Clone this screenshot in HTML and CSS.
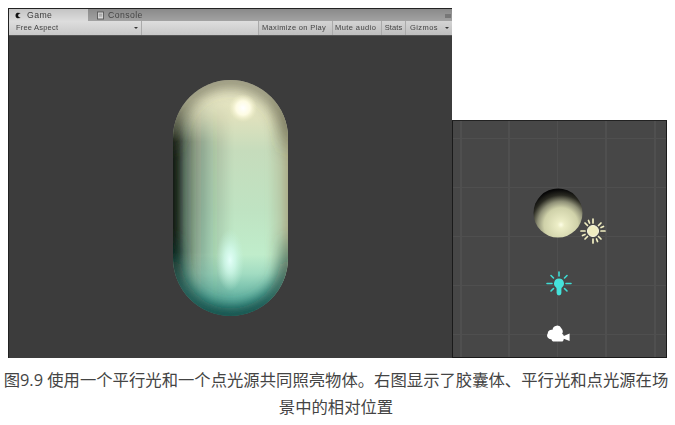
FILE: index.html
```html
<!DOCTYPE html>
<html lang="zh">
<head>
<meta charset="utf-8">
<title>图9.9</title>
<link rel="stylesheet" href="styles.css">
</head>
<body>
<figure class="figure">
  <div class="shots">
    <section class="game">
      <div class="tabs">
        <div class="tab tab-active">
          <svg class="tab-icon" viewBox="0 0 8 8"><path d="M6.500 1.200 2.600 .9C1 1.600.6 3 .6 4s.4 2.400 2 3.100l3.900-.3-2.400-1.500-.6-1.300.6-1.300z"/></svg>
          <span>Game</span>
        </div>
        <div class="tab">
          <svg class="tab-icon console-icon" viewBox="0 0 8 9"><rect x=".5" y=".5" width="7" height="8" fill="#d8d8d8" stroke="#555"/><path d="M2 3h4M2 5h4" stroke="#888"/></svg>
          <span>Console</span>
        </div>
        <div class="tab-menu"></div>
      </div>
      <div class="toolbar">
        <div class="aspect"><span>Free Aspect</span><i class="caret"></i></div>
        <div class="spacer"></div>
        <div class="tool tool-max">Maximize on Play</div>
        <div class="tool tool-mute">Mute audio</div>
        <div class="tool tool-stats">Stats</div>
        <div class="tool tool-gizmos"><span>Gizmos</span><i class="caret"></i></div>
      </div>
      <div class="viewport">
        <svg class="capsule" viewBox="0 0 125 246" width="125" height="246">
          <defs>
            <linearGradient id="body" x1="0" y1="0" x2="0" y2="1">
              <stop offset="0" stop-color="#ece9c8"/>
              <stop offset=".16" stop-color="#dfe1bd"/>
              <stop offset=".3" stop-color="#c6dcbc"/>
              <stop offset=".55" stop-color="#bfe3c2"/>
              <stop offset=".74" stop-color="#c0edcb"/>
              <stop offset=".82" stop-color="#a2dcc2"/>
              <stop offset=".92" stop-color="#65b4a3"/>
              <stop offset="1" stop-color="#3c8a80"/>
            </linearGradient>
            <linearGradient id="side" gradientUnits="userSpaceOnUse" x1="5" y1="0" x2="120" y2="0">
              <stop offset="0" stop-color="#0a1410" stop-opacity=".98"/>
              <stop offset=".04" stop-color="#0a1410" stop-opacity=".9"/>
              <stop offset=".1" stop-color="#14241e" stop-opacity=".6"/>
              <stop offset=".2" stop-color="#14241e" stop-opacity=".34"/>
              <stop offset=".35" stop-color="#14241e" stop-opacity=".14"/>
              <stop offset=".52" stop-color="#14241e" stop-opacity="0"/>
            </linearGradient>
            <linearGradient id="side-right" gradientUnits="userSpaceOnUse" x1="5" y1="0" x2="120" y2="0">
              <stop offset=".82" stop-color="#a8a480" stop-opacity="0"/>
              <stop offset=".93" stop-color="#a8a480" stop-opacity=".35"/>
              <stop offset="1" stop-color="#a8a480" stop-opacity=".85"/>
            </linearGradient>
            <linearGradient id="fade" x1="0" y1="0" x2="0" y2="1">
              <stop offset=".1" stop-color="#fff" stop-opacity="0"/>
              <stop offset=".27" stop-color="#fff"/>
              <stop offset=".72" stop-color="#fff"/>
              <stop offset=".95" stop-color="#fff" stop-opacity=".3"/>
            </linearGradient>
            <mask id="side-mask" maskUnits="userSpaceOnUse" x="0" y="0" width="125" height="246">
              <rect width="125" height="246" fill="url(#fade)"/>
            </mask>
            <linearGradient id="edge" gradientUnits="userSpaceOnUse" x1="0" y1="5" x2="0" y2="241">
              <stop offset="0" stop-color="#4a4a38" stop-opacity=".6"/>
              <stop offset=".2" stop-color="#4a4a38" stop-opacity=".55"/>
              <stop offset=".32" stop-color="#4a4a38" stop-opacity="0"/>
              <stop offset=".64" stop-color="#0c4a46" stop-opacity="0"/>
              <stop offset=".82" stop-color="#0c4a46" stop-opacity=".75"/>
              <stop offset="1" stop-color="#0a4844" stop-opacity="1"/>
            </linearGradient>
            <radialGradient id="spec-top">
              <stop offset="0" stop-color="#ffffff"/>
              <stop offset=".5" stop-color="#fffde6" stop-opacity=".95"/>
              <stop offset="1" stop-color="#f4f2c8" stop-opacity="0"/>
            </radialGradient>
            <radialGradient id="spec-low">
              <stop offset="0" stop-color="#e4fffa"/>
              <stop offset=".4" stop-color="#d4fbee" stop-opacity=".75"/>
              <stop offset="1" stop-color="#c4f2dc" stop-opacity="0"/>
            </radialGradient>
            <clipPath id="shape"><rect x="5" y="5" width="115" height="236" rx="57.500" ry="58"/></clipPath>
            <filter id="soft" x="-10%" y="-10%" width="120%" height="120%"><feGaussianBlur stdDeviation=".7"/></filter>
            <filter id="inner" filterUnits="userSpaceOnUse" x="-30" y="-30" width="185" height="306"><feGaussianBlur stdDeviation="7"/></filter>
            <filter id="band" filterUnits="userSpaceOnUse" x="-30" y="-30" width="185" height="306"><feGaussianBlur stdDeviation="2"/></filter>
          </defs>
          <g filter="url(#soft)">
            <g clip-path="url(#shape)">
              <rect x="5" y="5" width="115" height="236" fill="url(#body)"/>
              <g mask="url(#side-mask)">
                <rect x="-15" y="5" width="155" height="236" fill="url(#side)" filter="url(#band)"/>
              </g>
              <rect x="-15" y="5" width="155" height="236" fill="url(#side-right)" filter="url(#band)"/>
              <rect x="5" y="5" width="115" height="236" rx="57.500" ry="58" fill="none" stroke="url(#edge)" stroke-width="16" filter="url(#inner)"/>
              <ellipse cx="75" cy="33" rx="14" ry="14" fill="url(#spec-top)"/>
              <ellipse cx="62" cy="185" rx="14" ry="31" fill="url(#spec-low)"/>
            </g>
          </g>
        </svg>
      </div>
    </section>
    <section class="scene">
      <svg class="scene-sphere" viewBox="0 0 52 52" width="52" height="52">
        <defs>
          <radialGradient id="ball" cx=".56" cy=".74" r=".72">
            <stop offset="0" stop-color="#fdfde6"/>
            <stop offset=".1" stop-color="#ecedc6"/>
            <stop offset=".48" stop-color="#cfd1a9"/>
            <stop offset=".66" stop-color="#8f9077"/>
            <stop offset=".84" stop-color="#2a2a22"/>
            <stop offset="1" stop-color="#070707"/>
          </radialGradient>
        </defs>
        <circle cx="26" cy="26" r="24.500" fill="url(#ball)"/>
      </svg>
      <svg class="gizmo gizmo-sun" viewBox="0 0 26 26" width="26" height="26">
        <g stroke="#f2efc2" stroke-width="1.700" stroke-linecap="round">
          <path d="M13 1v4M13 21v4M1 13h4M21 13h4M5 5l2.500 2.500M18.500 18.500 21 21M5 21l2.500-2.500M18.500 7.500 21 5M8.500 2.500l1 2.500M16.500 21l1 2.500M2.500 17.500l2.500-1M21 9.500l2.500-1"/>
        </g>
        <circle cx="13" cy="13" r="5.500" fill="#efecc0" stroke="#fbfae0"/>
      </svg>
      <svg class="gizmo gizmo-bulb" viewBox="0 0 26 26" width="26" height="26">
        <g stroke="#3fdcd4" stroke-width="1.600" stroke-linecap="round">
          <path d="M13 1v4M1 12.500h5M20 12.500h5M5 4.500 7.500 7M21 4.500 18.500 7M5 20l2.500-2.500M21 20l-2.500-2.500"/>
        </g>
        <path d="M13 7.500a5 5 0 0 1 3.200 8.800c-.6.500-.8 1-.8 1.700v4a2.400 2.400 0 0 1-4.800 0v-4c0-.7-.2-1.200-.8-1.700A5 5 0 0 1 13 7.500z" fill="#45e2da"/>
      </svg>
      <svg class="gizmo gizmo-cam" viewBox="0 0 24 18" width="24" height="18">
        <path fill="#fff" d="M.7 8.500a3.800 3.800 0 0 1 4.800-3.700 4.700 4.700 0 0 1 9-1.300 4.300 4.300 0 0 1 .6 5.200c1 .5 1.600 1.400 1.700 2.200l5.800-2.400v7.500l-5.800-2.300c-.2 1.900-1 2.900-2.300 2.900H7c-1.300 0-2.300-.9-2.600-2.300A3.800 3.800 0 0 1 .7 8.500z"/>
      </svg>
    </section>
  </div>
  <figcaption class="caption">图9.9 使用一个平行光和一个点光源共同照亮物体。右图显示了胶囊体、平行光和点光源在场景中的相对位置</figcaption>
</figure>
</body>
</html>
```
FILE: styles.css
```css
* { box-sizing: border-box; }
html, body { margin: 0; background: #fff; }
body { width: 675px; height: 425px; overflow: hidden; }
.figure { margin: 0; padding: 8px 0 0; }
.shots { display: flex; align-items: flex-end; padding-left: 8px; }
.game {
  width: 444px; height: 350px;
  display: flex; flex-direction: column;
  border: 1px solid #222; border-bottom: 0; border-right: 0;
  background: #3c3c3c;
  font: 7.500px/1 "Liberation Sans", Arial, sans-serif;
  letter-spacing: .42px;
  color: #444;
}
.tabs {
  height: 12px; flex: none;
  display: flex; align-items: stretch;
  background: linear-gradient(#8a8a8a, #a2a2a2);
  font-size: 8.700px;
}
.tab {
  width: 79px; padding-left: 6px;
  display: flex; align-items: center; gap: 3px;
}
.tab span { filter: blur(.35px); }
.tab-active { background: linear-gradient(#c4c4c4, #dcdcdc); width: 79px; color: #3a3a3a; }
.tab-icon { width: 7px; height: 7px; fill: #111; margin-right: 2px; }
.console-icon { width: 7px; height: 9px; margin-left: 3px; margin-right: 1px; }
.tab-menu { margin-left: auto; width: 6px; height: 4px; margin-top: 5px; margin-right: 1px; background: #777; }
.toolbar {
  height: 15px; flex: none;
  display: flex; align-items: stretch;
  background: linear-gradient(#dedede, #c8c8c8);
  border-bottom: 1px solid #555;
}
.toolbar > div { display: flex; align-items: center; filter: blur(.3px); }
.aspect { width: 133px; padding-left: 7px; justify-content: space-between; padding-right: 3px; border-right: 1px solid #aaa; letter-spacing: .2px; }
.spacer { flex: 1; }
.tool { justify-content: center; border-left: 1px solid #aaa; white-space: nowrap; background: linear-gradient(#d4d4d4, #bebebe); }
.tool-max { width: 74px; letter-spacing: .34px; justify-content: flex-start; padding-left: 3px; }
.tool-mute { width: 49px; justify-content: flex-start; padding-left: 2px; }
.tool-stats { width: 24px; letter-spacing: .1px; }
.tool-gizmos { width: 47px; justify-content: flex-start; padding-left: 4px; gap: 7px; }
.caret { width: 0; height: 0; border: 2px solid transparent; border-top: 2.500px solid #333; border-bottom: 0; }
.viewport { flex: 1; display: flex; justify-content: center; padding: 39px 0 0 0; }
.capsule { display: block; }
.scene {
  position: relative;
  width: 215px; height: 238px;
  border: 1px solid #1a1a1a; border-top-color: #222;
  background-color: #474747;
  background-image:
    linear-gradient(#4f4f4f, #4f4f4f), linear-gradient(#4f4f4f, #4f4f4f), linear-gradient(#4f4f4f, #4f4f4f), linear-gradient(#4f4f4f, #4f4f4f), linear-gradient(#4f4f4f, #4f4f4f),
    linear-gradient(#4f4f4f, #4f4f4f), linear-gradient(#4f4f4f, #4f4f4f), linear-gradient(#4f4f4f, #4f4f4f), linear-gradient(#4f4f4f, #4f4f4f), linear-gradient(#4f4f4f, #4f4f4f);
  background-repeat: no-repeat;
  background-size: 2px 100%, 2px 100%, 1px 100%, 2px 100%, 2px 100%, 100% 1px, 100% 1px, 100% 1px, 100% 1px, 100% 1px;
  background-position: 7px 0, 55px 0, 104px 0, 152px 0, 201px 0, 0 17px, 0 66px, 0 115px, 0 164px, 0 213px;
}
.scene-sphere { position: absolute; left: 79px; top: 66px; }
.gizmo { position: absolute; }
.gizmo-sun { left: 127px; top: 97px; }
.gizmo-bulb { left: 93px; top: 150px; }
.gizmo-cam { left: 94px; top: 204px; }
.caption {
  margin: 9px 0 0;
  padding: 0 3px 0 0;
  text-align: center;
  color: #444;
  font: 16.350px/27px "Open Sans", "Noto Sans CJK SC", "Liberation Sans", sans-serif;
  text-spacing-trim: space-all;
  font-kerning: none;
}
```
